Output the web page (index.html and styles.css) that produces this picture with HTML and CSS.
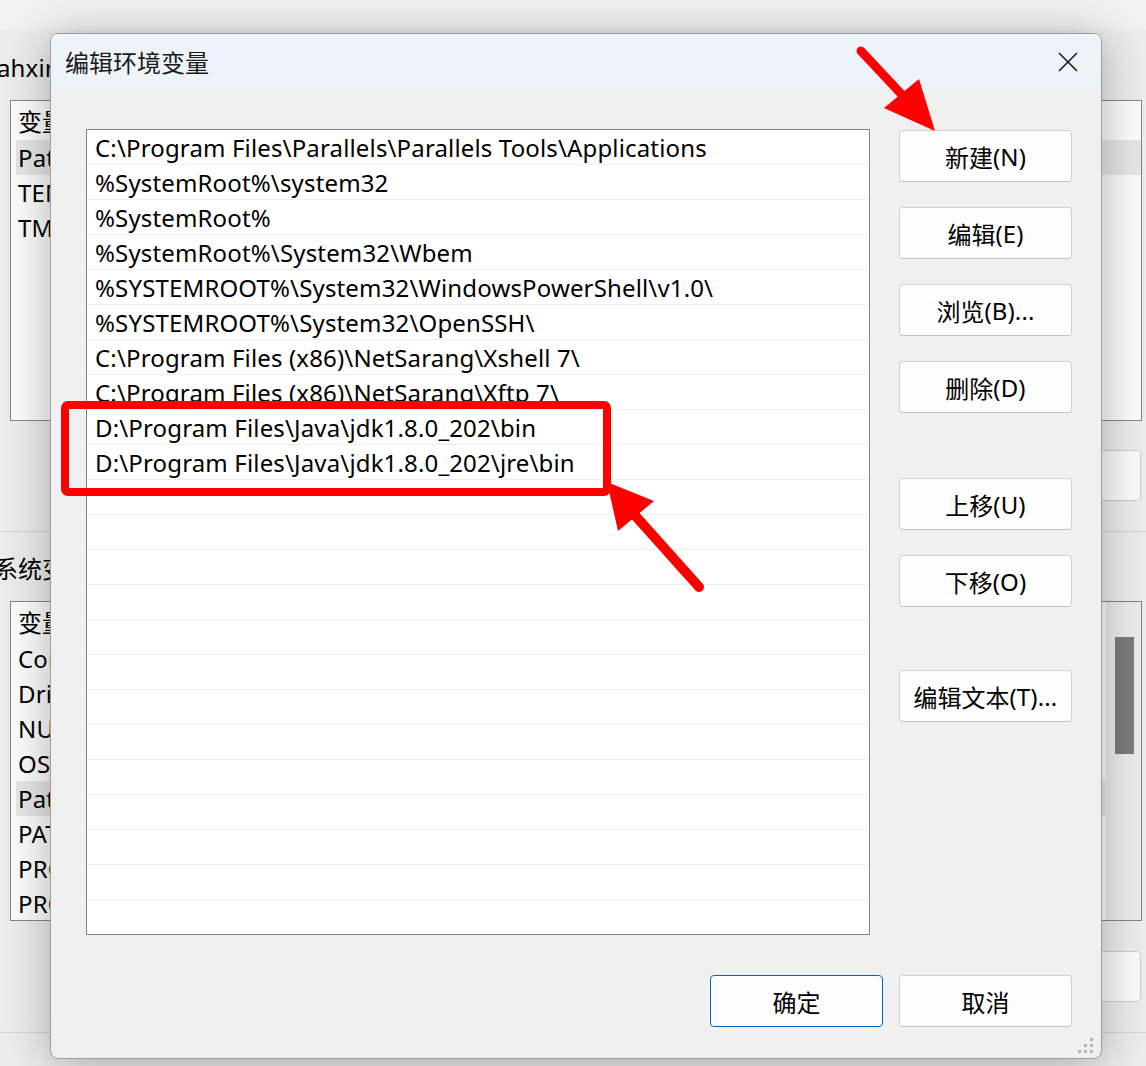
FILE: index.html
```html
<!DOCTYPE html>
<html lang="zh-CN">
<head>
<meta charset="utf-8">
<title>编辑环境变量</title>
<link rel="stylesheet" href="styles.css">
</head>
<body>
<div class="bgwin">
  <div class="bg-label user">ahxin</div>
  <div class="bg-list list1">
    <div class="bg-rows">
      <div class="bg-row head"><span class="cjk">变量</span></div>
      <div class="bg-row sel">Path</div>
      <div class="bg-row">TEMP</div>
      <div class="bg-row">TMP</div>
    </div>
  </div>
  <div class="bg-btnrow first"><div class="bg-btn"></div></div>
  <div class="bg-sep"></div>
  <div class="bg-label sys"><span class="cjk">系统变量</span></div>
  <div class="bg-list list2">
    <div class="bg-rows">
      <div class="bg-row head"><span class="cjk">变量</span></div>
      <div class="bg-row">ComSpec</div>
      <div class="bg-row">DriverData</div>
      <div class="bg-row">NUMBER_OF_PROCESSORS</div>
      <div class="bg-row">OS</div>
      <div class="bg-row sel">Path</div>
      <div class="bg-row">PATHEXT</div>
      <div class="bg-row">PROCESSOR_ARCHITECTURE</div>
      <div class="bg-row">PROCESSOR_IDENTIFIER</div>
    </div>
    <div class="bg-scroll"><div class="bg-thumb"></div></div>
  </div>
  <div class="bg-btnrow second"><div class="bg-btn"></div></div>
  <div class="bg-sep"></div>
</div>

<div class="dialog">
  <div class="titlebar">
    <div class="title">编辑环境变量</div>
    <svg class="close" width="20" height="20" viewBox="0 0 20 20">
      <path d="M1 1 L19 19 M19 1 L1 19" stroke="#1a1a1a" stroke-width="1.6" fill="none"/>
    </svg>
  </div>
  <div class="body">
    <div class="list">
      <div class="row">C:\Program Files\Parallels\Parallels Tools\Applications</div>
      <div class="row">%SystemRoot%\system32</div>
      <div class="row">%SystemRoot%</div>
      <div class="row">%SystemRoot%\System32\Wbem</div>
      <div class="row">%SYSTEMROOT%\System32\WindowsPowerShell\v1.0\</div>
      <div class="row">%SYSTEMROOT%\System32\OpenSSH\</div>
      <div class="row">C:\Program Files (x86)\NetSarang\Xshell 7\</div>
      <div class="row">C:\Program Files (x86)\NetSarang\Xftp 7\</div>
      <div class="row">D:\Program Files\Java\jdk1.8.0_202\bin</div>
      <div class="row">D:\Program Files\Java\jdk1.8.0_202\jre\bin</div>
      <div class="row"></div>
      <div class="row"></div>
      <div class="row"></div>
      <div class="row"></div>
      <div class="row"></div>
      <div class="row"></div>
      <div class="row"></div>
      <div class="row"></div>
      <div class="row"></div>
      <div class="row"></div>
      <div class="row"></div>
      <div class="row"></div>
      <div class="row"></div>
    </div>
    <div class="side">
      <div class="btn b-new"><span class="cjk">新建</span>(N)</div>
      <div class="btn b-edit"><span class="cjk">编辑</span>(E)</div>
      <div class="btn b-browse"><span class="cjk">浏览</span>(B)...</div>
      <div class="btn b-del"><span class="cjk">删除</span>(D)</div>
      <div class="btn b-up"><span class="cjk">上移</span>(U)</div>
      <div class="btn b-down"><span class="cjk">下移</span>(O)</div>
      <div class="btn b-text"><span class="cjk">编辑文本</span>(T)...</div>
    </div>
  </div>
  <div class="footer">
    <div class="btn primary"><span class="cjk">确定</span></div>
    <div class="btn"><span class="cjk">取消</span></div>
  </div>
  <svg class="grip" width="16" height="16" viewBox="0 0 16 16">
    <rect x="12" y="0" width="3" height="3" fill="#b4b4b4"/>
    <rect x="6" y="6" width="3" height="3" fill="#b4b4b4"/>
    <rect x="12" y="6" width="3" height="3" fill="#b4b4b4"/>
    <rect x="0" y="12" width="3" height="3" fill="#b4b4b4"/>
    <rect x="6" y="12" width="3" height="3" fill="#b4b4b4"/>
    <rect x="12" y="12" width="3" height="3" fill="#b4b4b4"/>
  </svg>
</div>

<svg class="annot" width="1146" height="1066" viewBox="0 0 1146 1066">
  <rect x="65" y="405" width="542" height="87" rx="3" fill="none" stroke="#fe0000" stroke-width="8"/>
  <line x1="861" y1="51" x2="905" y2="98" stroke="#fe0000" stroke-width="9" stroke-linecap="round"/>
  <polygon points="935,131 884,108 919,79" fill="#fe0000"/>
  <line x1="699" y1="587" x2="632" y2="512" stroke="#fe0000" stroke-width="10" stroke-linecap="round"/>
  <polygon points="607,482 654,501 618,531" fill="#fe0000"/>
</svg>
</body>
</html>
```

FILE: styles.css
```css
* { box-sizing: border-box; }
html, body { margin: 0; padding: 0; }
body {
  width: 1146px;
  height: 1066px;
  overflow: hidden;
  position: relative;
  background: #eeeeee;
  font-family: "Noto Sans", "Noto Sans CJK SC", sans-serif;
  font-size: 24px;
  letter-spacing: 0.15px;
  color: #000;
}
.cjk { font-family: "Noto Sans CJK SC", sans-serif; font-size: 24px; letter-spacing: 0; }

/* background window */
.bgwin {
  display: flex;
  flex-direction: column;
  height: 100%;
  background: linear-gradient(#f2f2f2 0, #f2f2f2 30px, #ececec 30px);
}
.bg-label { height: 35px; line-height: 35px; white-space: nowrap; }
.bg-label.user { margin-top: 50px; margin-left: -3px; }
.bg-label.sys { margin-top: 18px; margin-left: -6px; }
.bg-list {
  margin-left: 10px;
  width: 1132px;
  border: 1px solid #868686;
  background: #fcfcfc;
  display: flex;
  overflow: hidden;
}
.list1 { margin-top: 15px; height: 321px; }
.list2 { margin-top: 16px; height: 320px; }
.bg-rows { flex: 1; display: flex; flex-direction: column; padding-left: 5px; }
.bg-row { height: 35px; line-height: 35px; padding-left: 2px; white-space: nowrap; }
.bg-row.head { height: 39px; line-height: 39px; }
.bg-row.sel { background: #e6e6e6; }
.bg-scroll { width: 35px; background: #ececec; padding: 35px 0 0 9px; }
.bg-thumb { width: 19px; height: 117px; background: #7b7b7b; }
.bg-btnrow { display: flex; justify-content: flex-end; padding-right: 5px; }
.bg-btnrow.first { margin-top: 29px; }
.bg-btnrow.second { margin-top: 30px; }
.bg-btn {
  width: 173px;
  height: 51px;
  border: 1px solid #cdcdcd;
  border-radius: 4px;
  background: #fbfbfb;
}
.bg-sep { height: 1px; background: #d6d6d6; margin-top: 30px; }

/* dialog */
.dialog {
  position: absolute;
  left: 50px;
  top: 33px;
  width: 1052px;
  height: 1026px;
  border: 1px solid #9c9c9c;
  border-radius: 8px;
  background: #f0f0f0;
  box-shadow: 0 4px 46px rgba(0, 0, 0, 0.3);
  overflow: hidden;
  display: flex;
  flex-direction: column;
}
.titlebar {
  height: 56px;
  background: #eef3f9;
  display: flex;
  align-items: center;
  justify-content: space-between;
  padding-left: 14px;
  padding-right: 23px;
  flex: none;
}
.title {
  font-family: "Noto Sans CJK SC", sans-serif;
  font-size: 24px;
  letter-spacing: 0;
  color: #1b1b1b;
  margin-top: -2px;
}
.close { display: block; margin-top: -1px; }
.body {
  display: flex;
  padding: 39px 0 0 35px;
  flex: none;
}
.list {
  width: 784px;
  height: 806px;
  border: 1px solid #838383;
  background: #fff;
  overflow: hidden;
  flex: none;
}
.row {
  height: 35px;
  border-bottom: 1px solid #eeeeee;
  padding: 2px 0 0 8px;
  line-height: 32px;
  white-space: nowrap;
}
.side {
  margin-left: 29px;
  display: flex;
  flex-direction: column;
  padding-top: 1px;
}
.btn {
  width: 173px;
  height: 52px;
  border: 1px solid #d0d0d0;
  border-bottom-color: #c2c2c2;
  border-radius: 4px;
  background: #fdfdfd;
  display: flex;
  align-items: center;
  justify-content: center;
  white-space: nowrap;
  color: #000;
}
.b-edit, .b-browse, .b-del, .b-down { margin-top: 25px; }
.b-up { margin-top: 65px; }
.b-text { margin-top: 63px; }
.footer {
  display: flex;
  justify-content: flex-end;
  gap: 16px;
  padding-right: 29px;
  margin-top: 40px;
}
.btn.primary { border: 1px solid #0067c0; }
.grip { position: absolute; right: 7px; bottom: 4px; }

.annot { position: absolute; left: 0; top: 0; pointer-events: none; }
```
